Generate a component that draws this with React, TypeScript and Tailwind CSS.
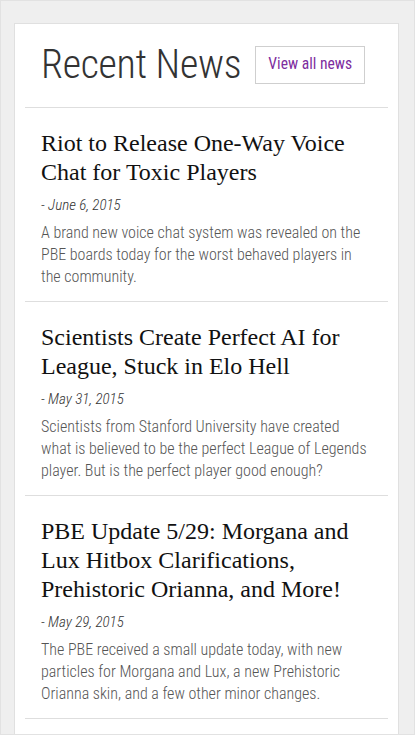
import React from 'react';

interface NewsItem {
  id: number;
  title: string;
  date: string;
  excerpt: string;
}

const news: NewsItem[] = [
  {
    id: 1,
    title: 'Riot to Release One-Way Voice Chat for Toxic Players',
    date: 'June 6, 2015',
    excerpt:
      'A brand new voice chat system was revealed on the PBE boards today for the worst behaved players in the community.',
  },
  {
    id: 2,
    title: 'Scientists Create Perfect AI for League, Stuck in Elo Hell',
    date: 'May 31, 2015',
    excerpt:
      'Scientists from Stanford University have created what is believed to be the perfect League of Legends player. But is the perfect player good enough?',
  },
  {
    id: 3,
    title: 'PBE Update 5/29: Morgana and Lux Hitbox Clarifications, Prehistoric Orianna, and More!',
    date: 'May 29, 2015',
    excerpt:
      'The PBE received a small update today, with new particles for Morgana and Lux, a new Prehistoric Orianna skin, and a few other minor changes.',
  },
];

// Roboto at 75% stretch resolves to the condensed face
const narrow = "font-['Roboto',sans-serif] [font-stretch:75%]";

export default function App() {
  return (
    <div className="h-[735px] w-[415px] overflow-hidden bg-[#efefef] border border-[#e2e2e2] pl-[13px] pr-[15px] pt-[22px]">
      <div className="bg-white border border-[#e0e0e0] px-[10px] min-h-[720px]">
        {/* Header */}
        <div className="flex items-center gap-[14px] pl-[16px] pt-[17px] pb-[18px] border-b border-[#dedede]">
          <h2 className={`${narrow} font-light text-[40px] leading-[48px] text-[#333] tracking-[-0.3px]`}>
            Recent News
          </h2>
          <a
            href="#"
            className={`${narrow} border border-[#cfcfcf] px-[12px] h-[38px] flex items-center text-[15.6px] text-[#7d2c9e]`}
          >
            View all news
          </a>
        </div>

        {news.map((item) => (
          <article key={item.id} className="pl-[16px] pr-[20px] pt-[21px] pb-[13px] border-b border-[#dedede]">
            <h3 className="font-['Liberation_Serif',serif] text-[24px] leading-[29px] text-[#111]">
              {item.title}
            </h3>
            <p className={`${narrow} italic font-light text-[15px] leading-[20px] text-[#333] mt-[8px]`}>
              - {item.date}
            </p>
            <p className={`${narrow} font-light text-[16px] leading-[22px] text-[#555] mt-[7px]`}>
              {item.excerpt}
            </p>
          </article>
        ))}
      </div>
    </div>
  );
}
